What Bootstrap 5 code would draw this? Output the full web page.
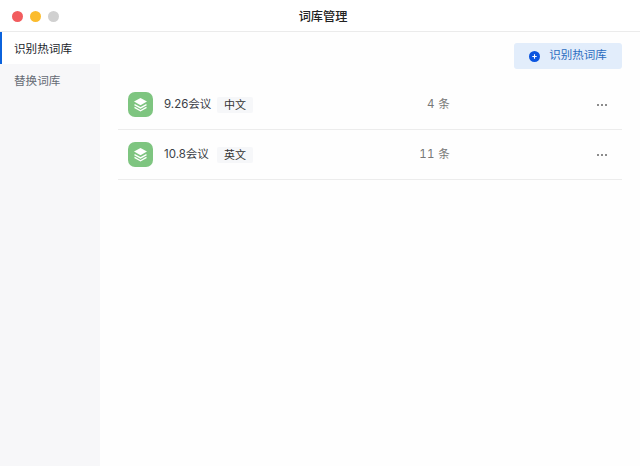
<!doctype html>
<html lang="zh"><head><meta charset="utf-8">
<link href="https://cdn.jsdelivr.net/npm/bootstrap@5.3.0/dist/css/bootstrap.min.css" rel="stylesheet">
<style>
html,body{height:466px;overflow:hidden}
body{font-family:"Inter","Noto Sans CJK SC",sans-serif;background:#fefefe;color:#2a2e36}
.win-title{height:32px;border-bottom:1px solid #ebebeb;font-size:12.2px;font-weight:500;color:#222;padding:3px 0 0 6px;background:#fff}
.lights{left:12px;top:11px;gap:7px}
.light{width:11px;height:11px;border-radius:50%}
.l-red{background:#f25c5e}.l-amber{background:#fbbc2e}.l-grey{background:#d0d0d0}
.side{width:100px;height:434px;background:#f7f7f9;font-size:11.6px}
.side-item{height:32px;padding-left:14px;padding-top:3px;color:#666b75}
.side-item.on{background:#fff;border-left:2px solid #0b62dc;padding-left:12px;color:#22252b}
.main-col{padding:11px 18px 0}
.add-btn{width:108px;height:26px;background:#e2edfb;border-radius:3px;color:#2b6cc0;font-size:11.5px;gap:9px;border:0;padding:0}
.lib-row{height:50px;border-bottom:1px solid #ececec;padding:1px 15px 0 10px;font-size:11.5px;color:#3b3f47}
.ico{width:25px;height:25px;border-radius:7px;background:#7ec580;margin:-1px 11px 0 0}
.lib-name{width:47px;white-space:nowrap}
.tag{height:16px;padding:0 7px;margin-left:6px;background:#f6f7f9;border-radius:2px;font-size:11px;line-height:16px;color:#333}
.cnt{margin-left:auto;margin-right:147px;text-align:right;color:#777;font-size:11.5px;font-variant-numeric:tabular-nums;letter-spacing:.3px}
.dots{gap:2px}
.dots i{width:2px;height:2px;background:#666;border-radius:50%}
.list-wrap{margin-top:11px}
</style></head><body>
<div class="win-title position-relative d-flex align-items-center justify-content-center">
  <div class="lights position-absolute d-flex">
    <span class="light l-red"></span><span class="light l-amber"></span><span class="light l-grey"></span>
  </div>词库管理
</div>
<div class="d-flex">
  <nav class="side flex-shrink-0">
    <div class="side-item on d-flex align-items-center">识别热词库</div>
    <div class="side-item d-flex align-items-center">替换词库</div>
  </nav>
  <main class="main-col flex-grow-1">
    <div class="d-flex justify-content-end">
      <button class="add-btn btn d-flex align-items-center justify-content-center" type="button">
        <svg width="11" height="11" viewBox="0 0 12 12"><circle cx="6" cy="6" r="6" fill="#0b55e0"/><path d="M3.6 6h4.8M6 3.6v4.8" stroke="#fff" stroke-width="1.2"/></svg>识别热词库</button>
    </div>
    <div class="list-wrap">
      <div class="lib-row d-flex align-items-center">
        <div class="ico d-flex align-items-center justify-content-center flex-shrink-0"><svg width="17" height="17" viewBox="0 0 17 17"><path d="M8.5 2 15 5.6 8.5 9.2 2 5.6z" fill="#fff"/><path d="M2.5 8.6l6 3.3 6-3.3M2.5 11.4l6 3.3 6-3.3" fill="none" stroke="#fff" stroke-width="1.3"/></svg></div>
        <span class="lib-name">9.26会议</span><span class="tag">中文</span>
        <span class="cnt">4 条</span>
        <span class="dots d-flex"><i></i><i></i><i></i></span>
      </div>
      <div class="lib-row d-flex align-items-center">
        <div class="ico d-flex align-items-center justify-content-center flex-shrink-0"><svg width="17" height="17" viewBox="0 0 17 17"><path d="M8.5 2 15 5.6 8.5 9.2 2 5.6z" fill="#fff"/><path d="M2.5 8.6l6 3.3 6-3.3M2.5 11.4l6 3.3 6-3.3" fill="none" stroke="#fff" stroke-width="1.3"/></svg></div>
        <span class="lib-name">10.8会议</span><span class="tag">英文</span>
        <span class="cnt">11 条</span>
        <span class="dots d-flex"><i></i><i></i><i></i></span>
      </div>
    </div>
  </main>
</div>
<script src="https://cdn.jsdelivr.net/npm/bootstrap@5.3.0/dist/js/bootstrap.bundle.min.js"></script>
</body></html>
